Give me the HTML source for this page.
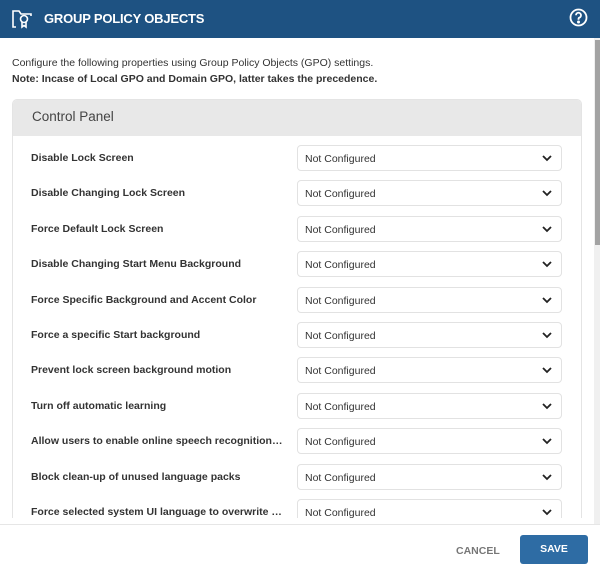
<!DOCTYPE html>
<html><head><meta charset="utf-8"><style>
*{box-sizing:border-box;margin:0;padding:0}
body{width:600px;height:571px;overflow:hidden;background:#fff;font-family:"Liberation Sans",sans-serif;position:relative;color:#333}
.hdr{position:absolute;left:0;top:0;width:600px;height:38px;background:#1e5282}
.hdr .t{position:absolute;left:44px;top:11px;color:#fff;font-weight:bold;font-size:13px;letter-spacing:-0.2px}
.sb{position:absolute;left:594px;top:38px;width:6px;height:487px;background:#f0f0f0}
.sb div{position:absolute;left:1px;top:2px;width:5px;height:205px;background:#a3a3a3}
.intro{position:absolute;left:12px;top:55px;font-size:10.5px;line-height:16px;color:#333}
.panel{position:absolute;left:12px;top:99px;width:570px;height:430px;border:1px solid #e4e4e4;border-radius:5px;overflow:hidden}
.ph{height:36px;background:#e8e8e8;font-size:13.5px;color:#444;padding:9px 0 0 19px}
.clip{position:absolute;left:0;top:0;width:594px;height:518px;overflow:hidden}
.row{position:absolute;left:31px;font-size:10.5px;font-weight:bold;color:#333}
.sel{position:absolute;left:297px;width:265px;height:26px;border:1px solid #e2e2e2;border-radius:4px;font-size:10.5px;padding:7px 0 0 7px;color:#333}
.sel svg{position:absolute;right:9px;top:9px}
.foot{position:absolute;left:0;top:524px;width:600px;border-top:1px solid #e6e6e6;height:47px;background:#fff}
.cancel{position:absolute;left:456px;top:545px;font-size:10.5px;font-weight:bold;color:#777}
.save{position:absolute;left:520px;top:535px;width:68px;height:29px;background:#2e6ca4;border-radius:3px;color:#fff;font-size:10.5px;font-weight:bold;text-align:center;line-height:29px}
</style></head><body>
<div class="hdr">
<svg style="position:absolute;left:11px;top:9px" width="24" height="20" viewBox="0 0 24 20" fill="none" stroke="#fff" stroke-width="1.6"><path d="M5 18H2V2h6l2 3h10v2"/><circle cx="13" cy="10" r="3.5"/><path d="M11 13v5l2-1.5 2 1.5v-5"/></svg>
<div class="t">GROUP POLICY OBJECTS</div>
<svg style="position:absolute;left:569px;top:8px" width="19" height="19" viewBox="0 0 19 19" fill="none" stroke="#fff" stroke-width="1.8"><circle cx="9.5" cy="9.5" r="8"/><path d="M7 7.3a2.5 2.5 0 1 1 3.4 2.3c-.7.3-.9.8-.9 1.6v.6"/><circle cx="9.5" cy="14" r=".6" fill="#fff"/></svg>
</div>
<div class="intro">Configure the following properties using Group Policy Objects (GPO) settings.<br><b>Note: Incase of Local GPO and Domain GPO, latter takes the precedence.</b></div>
<div class="clip">
<div class="panel"><div class="ph">Control Panel</div></div>
<div id="rows"></div>
</div>
<div class="sb"><div></div></div>
<div class="foot"></div>
<div class="cancel">CANCEL</div>
<div class="save">SAVE</div>
<script>
var L=["Disable Lock Screen","Disable Changing Lock Screen","Force Default Lock Screen","Disable Changing Start Menu Background","Force Specific Background and Accent Color","Force a specific Start background","Prevent lock screen background motion","Turn off automatic learning","Allow users to enable online speech recognition…","Block clean-up of unused language packs","Force selected system UI language to overwrite …"];
var h="";L.forEach(function(t,i){var y=158+i*35.4;h+='<div class="row" style="top:'+(y-6)+'px">'+t+'</div><div class="sel" style="top:'+(y-13)+'px">Not Configured<svg width="10" height="7" viewBox="0 0 10 7"><path d="M1 1l4 4 4-4" stroke="#222" stroke-width="1.8" fill="none"/></svg></div>';});
document.getElementById("rows").innerHTML=h;
</script>
</body></html>
